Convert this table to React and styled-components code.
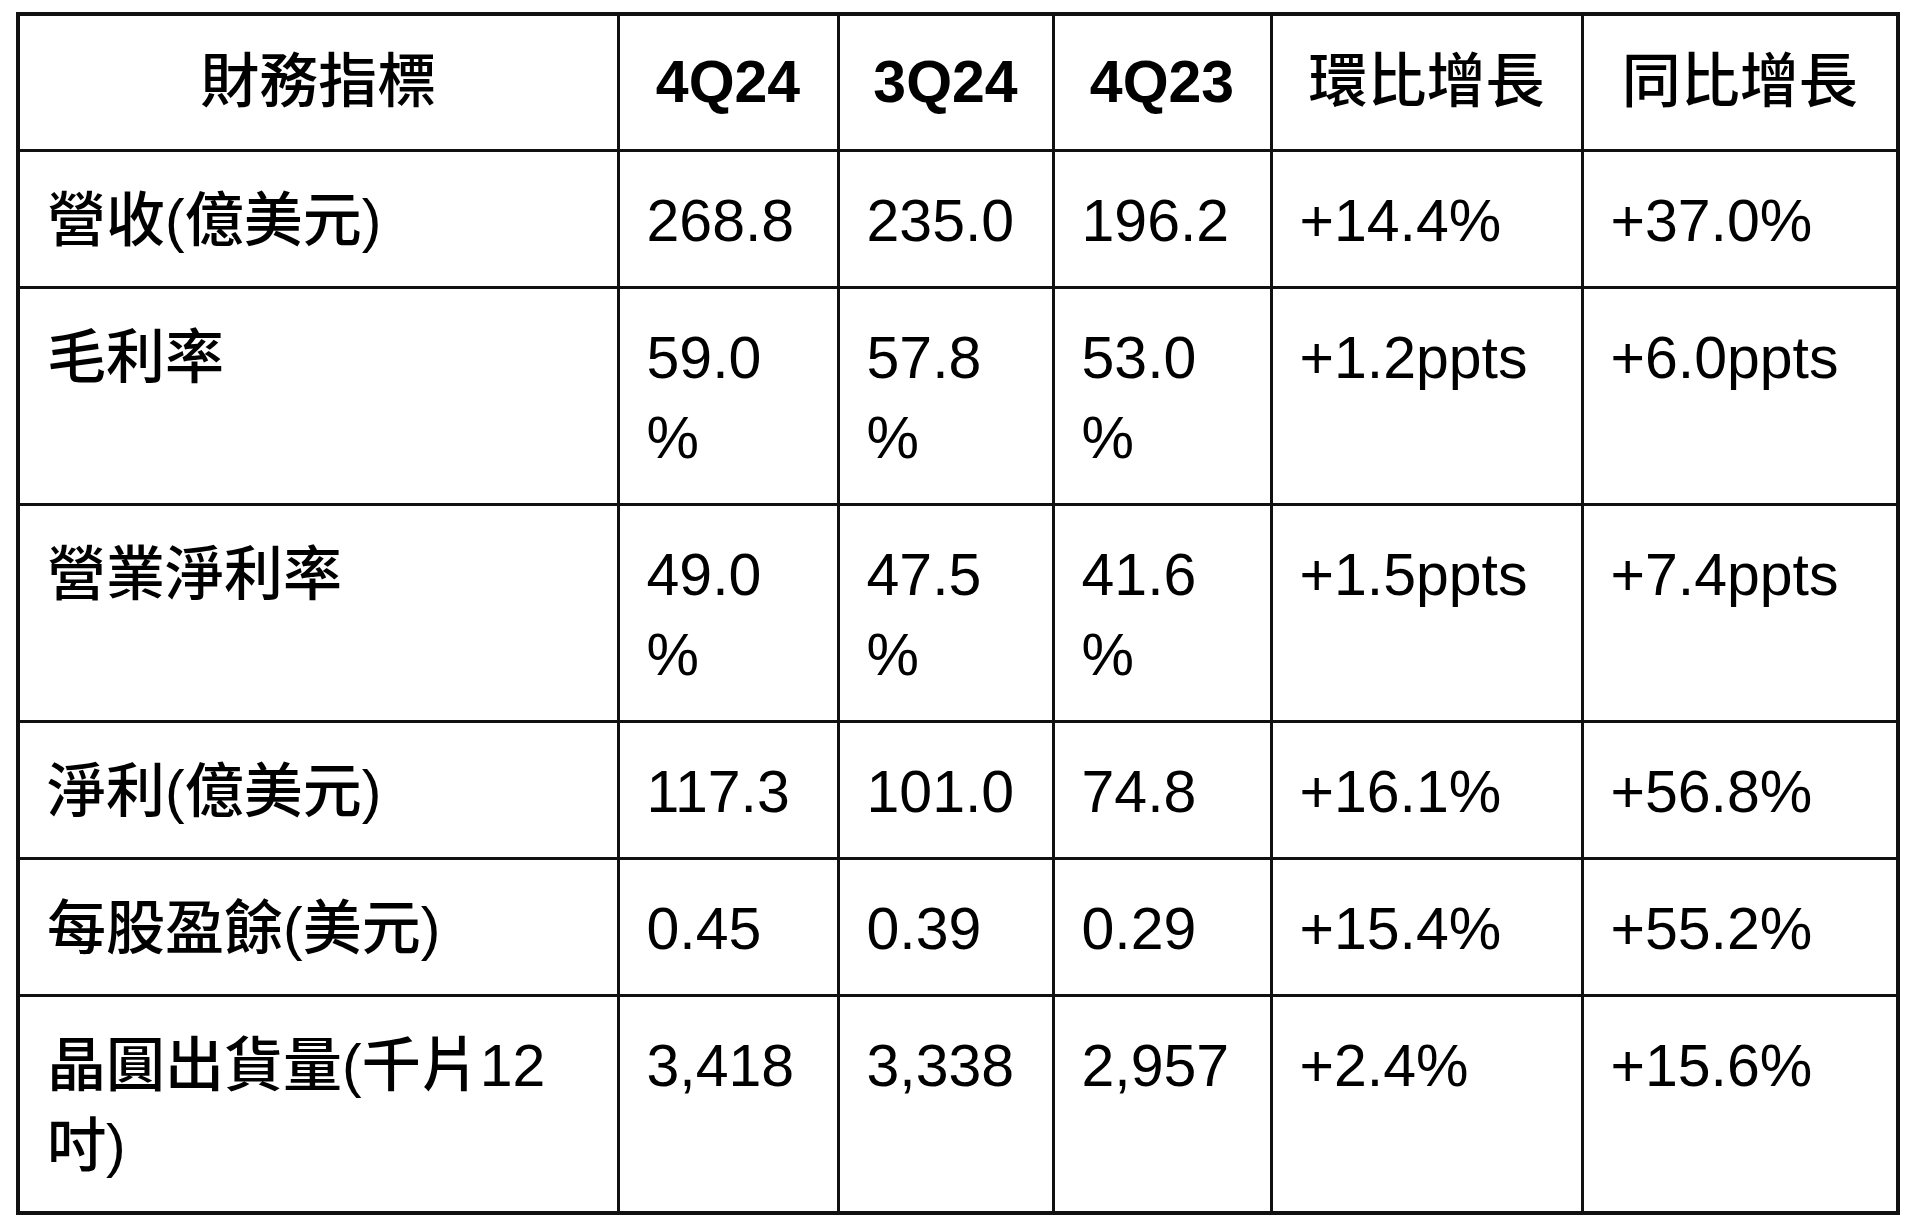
import React from 'react';
import styled, { createGlobalStyle } from 'styled-components';

const GlobalStyle = createGlobalStyle`
    html, body {
        margin: 0;
        padding: 0;
        background: #ffffff;
    }
    body {
        font-family: "Liberation Sans", Arial, "Noto Sans CJK TC", sans-serif;
        color: #000;
    }
`

const Page = styled.div`
    padding: 12px 0 0 16px;
    width: 1920px;
    height: 1227px;
    box-sizing: border-box;
    background: #fff;
`

const Table = styled.table`
    width: 1884px;
    table-layout: fixed;
    border-collapse: collapse;
    border: 4px solid #111;
`

const HeadCell = styled.th`
    border: 3px solid #111;
    padding: 26px 6px 27px;
    font-size: 59px;
    line-height: 80px;
    text-align: center;
    vertical-align: middle;
    font-weight: ${(props) => (props.$bold ? 700 : 500)};
    white-space: nowrap;
`

const Cell = styled.td`
    border: 3px solid #111;
    padding: 29px 27px 25px;
    font-size: 59px;
    font-weight: 500;
    line-height: 80px;
    text-align: left;
    vertical-align: top;
    overflow-wrap: anywhere;
`

const columns = [
    { label: '財務指標', width: 600 },
    { label: '4Q24', width: 220, bold: true },
    { label: '3Q24', width: 215, bold: true },
    { label: '4Q23', width: 218, bold: true },
    { label: '環比增長', width: 311 },
    { label: '同比增長', width: 316 },
];

const rows = [
    ['營收(億美元)', '268.8', '235.0', '196.2', '+14.4%', '+37.0%'],
    ['毛利率', '59.0%', '57.8%', '53.0%', '+1.2ppts', '+6.0ppts'],
    ['營業淨利率', '49.0%', '47.5%', '41.6%', '+1.5ppts', '+7.4ppts'],
    ['淨利(億美元)', '117.3', '101.0', '74.8', '+16.1%', '+56.8%'],
    ['每股盈餘(美元)', '0.45', '0.39', '0.29', '+15.4%', '+55.2%'],
    ['晶圓出貨量(千片12吋)', '3,418', '3,338', '2,957', '+2.4%', '+15.6%'],
];

const App = () => {
    return (
        <>
            <GlobalStyle />
            <Page>
                <Table>
                    <colgroup>
                        {columns.map((c) => (
                            <col key={c.label} style={{ width: c.width }} />
                        ))}
                    </colgroup>
                    <thead>
                        <tr>
                            {columns.map((c) => (
                                <HeadCell key={c.label} $bold={c.bold}>{c.label}</HeadCell>
                            ))}
                        </tr>
                    </thead>
                    <tbody>
                        {rows.map((r) => (
                            <tr key={r[0]}>
                                {r.map((v, i) => (
                                    <Cell key={i}>{v}</Cell>
                                ))}
                            </tr>
                        ))}
                    </tbody>
                </Table>
            </Page>
        </>
    );
}

export default App;
